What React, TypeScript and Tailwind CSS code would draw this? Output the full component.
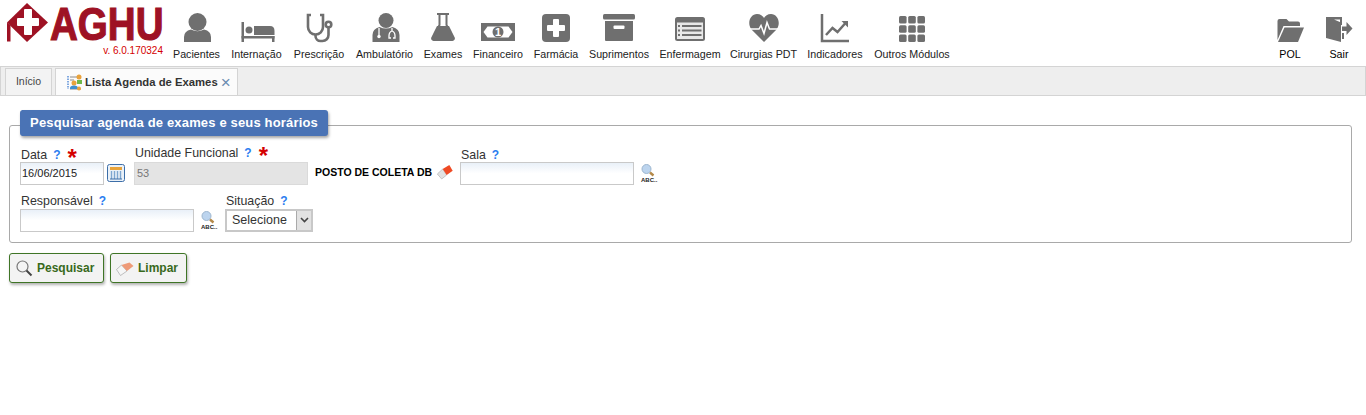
import React from "react";

const G = "#6f6f6f";

const Svg = ({ children }: { children: React.ReactNode }) => (
  <svg width="36" height="36" viewBox="0 0 36 36" className="block shrink-0">{children}</svg>
);

const icons: Record<string, React.ReactNode> = {
  pacientes: (
    <g fill={G}>
      <ellipse cx="18.500" cy="13" rx="9" ry="9" />
      <path d="M5 33v-5q0-6 7-7.500q6.500 3.500 13 0q7 1.500 7 7.500v5z" />
    </g>
  ),
  internacao: (
    <g fill={G}>
      <rect x="2.500" y="13" width="2.500" height="20" />
      <circle cx="10" cy="21" r="3.500" />
      <path d="M15 17h16q4.500 0 4.500 5v4H15z" />
      <rect x="2.500" y="27" width="33" height="2.500" />
      <rect x="33" y="27" width="2.500" height="6" />
    </g>
  ),
  prescricao: (
    <g fill="none" stroke={G} strokeWidth="2.600">
      <path d="M10 6H7v12a7.500 7.500 0 0 0 15 0V6h-3" />
      <path d="M14.500 26v1a5 5 0 0 0 5 5h2a6 6 0 0 0 6-6v-7" />
      <circle cx="27.500" cy="15.500" r="2.800" />
    </g>
  ),
  ambulatorio: (
    <g>
      <ellipse cx="19" cy="11.500" rx="7.500" ry="7.500" fill={G} />
      <path d="M5.500 33v-7q0-6 7-8q6.500 3 13 0q7 2 7 8v7z" fill={G} />
      <path d="M12 19v7M25 19v3q3 1 3 5v2h-2M25 22q-3 1-3 5v2h2" stroke="#fff" strokeWidth="1.300" fill="none" />
      <circle cx="12" cy="27.500" r="1.700" fill="#fff" />
    </g>
  ),
  exames: (
    <g>
      <rect x="12" y="4" width="12" height="2" fill={G} />
      <path d="M14.500 6v10L8 28.500M21.500 6v10L28 28.500" stroke={G} strokeWidth="2" fill="none" />
      <path d="M12 17h12l5.700 11.500A2.500 2.500 0 0 1 27.500 32h-19a2.500 2.500 0 0 1-2.200-3.500z" fill={G} />
    </g>
  ),
  financeiro: (
    <g>
      <rect x="1" y="14" width="34" height="18" fill={G} />
      <path d="M3.500 23l4-5.500h21l4 5.500-4 5.500h-21z" fill="#fff" />
      <circle cx="18" cy="23" r="5.500" fill={G} />
      <text x="18" y="27" textAnchor="middle" fill="#fff" fontSize="11" fontWeight="700" fontFamily="Liberation Sans">1</text>
    </g>
  ),
  farmacia: (
    <g>
      <rect x="4" y="5" width="28" height="28" rx="4" fill={G} />
      <rect x="9" y="16" width="18" height="6" rx="1" fill="#fff" />
      <rect x="15" y="10" width="6" height="18" rx="1" fill="#fff" />
    </g>
  ),
  suprimentos: (
    <g>
      <rect x="2" y="5" width="32" height="5.500" rx="1.500" fill={G} />
      <path d="M4 12h28v19a1 1 0 0 1-1 1H5a1 1 0 0 1-1-1z" fill={G} />
      <rect x="12.500" y="16.500" width="11" height="3.500" rx="1" fill="#fff" />
    </g>
  ),
  enfermagem: (
    <g>
      <rect x="3" y="8" width="30" height="24" rx="2.500" fill={G} />
      <rect x="5" y="13.500" width="26" height="16.500" fill="#e8e8e8" />
      <path d="M6 17h2M6 21.500h2M6 26h2M10 17h19.500M10 21.500h19.500M10 26h19.500" stroke={G} strokeWidth="2" />
    </g>
  ),
  cirurgias: (
    <g>
      <path d="M18 33L5.500 20.500C.5 14 4.500 5 11 5c3.500 0 5.700 1.800 7 4c1.300-2.200 3.500-4 7-4c6.500 0 10.500 9 5.500 15.500z" fill={G} />
      <path d="M3 20h10l2-3.500 3 8 3-11 2.500 6.500h11" stroke="#fff" strokeWidth="1.500" fill="none" />
    </g>
  ),
  indicadores: (
    <g fill="none" stroke={G}>
      <path d="M5 5v27h27" strokeWidth="2.500" />
      <path d="M9 26l6.500-7 5 4 8-9" strokeWidth="2.500" />
      <path d="M24.500 12h6.500v6.500z" fill={G} strokeWidth="0" />
    </g>
  ),
  outros: (
    <g fill={G}>
      {[7, 16.200, 25.400].map((y) =>
        [5, 14.200, 23.400].map((x) => <rect key={`${x}-${y}`} x={x} y={y} width="7.600" height="7.600" rx="1.500" />)
      )}
    </g>
  ),
  pol: (
    <g fill={G}>
      <path d="M5.500 31V12a2 2 0 0 1 2-2h7l2.500 2.500h9a2 2 0 0 1 2 2V17H11.500z" />
      <path d="M12.500 18.500H32L26 33H6z" />
    </g>
  ),
  sair: (
    <g fill={G}>
      <path d="M5 8h16v8h-2v-5.500h-6l7 3V33L5 29z" />
      <path d="M21 22v-4.500h4.500V13l6 6.500-6 6.500v-4z" />
      <rect x="21" y="24" width="2" height="6" />
    </g>
  ),
};

const nav: [string, string, string][] = [
  ["pacientes", "Pacientes", "w-[47px]"],
  ["internacao", "Internação", "w-[51px]"],
  ["prescricao", "Prescrição", "w-[52px]"],
  ["ambulatorio", "Ambulatório", "w-[57px]"],
  ["exames", "Exames", "w-[38px]"],
  ["financeiro", "Financeiro", "w-[50px]"],
  ["farmacia", "Farmácia", "w-[44px]"],
  ["suprimentos", "Suprimentos", "w-[60px]"],
  ["enfermagem", "Enfermagem", "w-[60px]"],
  ["cirurgias", "Cirurgias PDT", "w-[65px]"],
  ["indicadores", "Indicadores", "w-[56px]"],
  ["outros", "Outros Módulos", "w-[76px]"],
];

const NavItem = ({ icon, label, w, dark }: { icon: string; label: string; w: string; dark?: boolean }) => (
  <div className={`flex flex-col items-center pt-[9px] ${w}`}>
    <Svg>{icons[icon]}</Svg>
    <span className={`mt-[2px] text-[10.700px] leading-[14px] whitespace-nowrap ${dark ? "text-black" : "text-[#222]"}`}>{label}</span>
  </div>
);

const Logo = () => (
  <svg width="50" height="42" viewBox="0 0 50 42" className="block shrink-0">
    <path d="M7 19.500L27 0l21 19.500L27 39z" fill="#9e1224" />
    <path d="M7 19.500l3.500 3V38.500H7z" fill="#9e1224" />
    <rect x="17" y="15" width="22" height="8" rx="1" fill="#fff" />
    <rect x="24" y="6" width="8" height="26" rx="1" fill="#fff" />
  </svg>
);

const Help = () => <span className="ml-[6px] text-[12px] font-bold text-[#2b7df0]">?</span>;
const Req = () => <span className="ml-[7px] text-[24px] leading-[14px] font-bold text-[#d40000] align-[-7px]">*</span>;

const Label = ({ children, top }: { children: React.ReactNode; top?: boolean }) => (
  <div className={`h-[15px] pl-[1px] text-[12.400px] leading-[14px] text-[#333] whitespace-nowrap ${top ? "pt-[1px]" : ""}`}>{children}</div>
);

const inputCls =
  "h-[23px] border border-[#c9c9c9] bg-gradient-to-b from-[#e9f0f8] to-white to-50% px-[1px] text-[11px] text-[#222] outline-none";

const Lookup = () => (
  <svg width="18" height="20" viewBox="0 0 18 20" className="block shrink-0">
    <circle cx="6.500" cy="6" r="4.500" fill="#bcd4ee" stroke="#9db6cf" />
    <path d="M10 9.500l3.500 3" stroke="#b58a4a" strokeWidth="2.400" />
    <text x="1" y="18.500" fontSize="6" fontWeight="700" fontFamily="Liberation Sans" fill="#222">ABC..</text>
  </svg>
);

const Eraser = () => (
  <svg width="18" height="18" viewBox="0 0 18 18" className="block shrink-0">
    <path d="M1.300 10l5.400-5 4 6-5 4z" fill="#e2e2e2" stroke="#a8a8a8" strokeWidth=".6" />
    <path d="M6.700 5l6.600-4 3.400 5.700-6 4.300z" fill="#ef4a24" />
  </svg>
);

const EraserSoft = () => (
  <svg width="18" height="18" viewBox="0 0 18 18" className="block shrink-0">
    <path d="M.5 10.500l5-4.500 5.500 6-6.500 4.500z" fill="#f6f6f6" stroke="#a8a8a8" strokeWidth=".7" />
    <path d="M5.500 6l8-2.500 4 3.500-6.500 5z" fill="#ee9a78" />
  </svg>
);

const Calendar = () => (
  <svg width="18" height="18" viewBox="0 0 18 18" className="block shrink-0">
    <rect x=".5" y=".5" width="17" height="17" rx="2" fill="#eaf1f8" stroke="#3c6ea8" />
    <rect x="3" y="3" width="12" height="3" fill="#e8a33a" />
    <path d="M4.500 7v8M7.500 7v8M10.500 7v8M13.500 7v8" stroke="#7ea6cf" strokeWidth="1.400" />
    <rect x="3" y="14.500" width="12" height="1" fill="#3c6ea8" />
  </svg>
);

const TabIcon = () => (
  <svg width="16" height="17" viewBox="0 0 16 17" className="block shrink-0">
    <path d="M1 2v13" stroke="#5a8fd8" strokeWidth="1.500" strokeDasharray="1.500 1" />
    <path d="M3 3h9M3 6h4M3 15h11" stroke="#8a8a8a" strokeWidth="1" />
    <circle cx="12" cy="3" r="2.500" fill="#e9a23b" />
    <rect x="10" y="6" width="5" height="4" fill="#6fb84a" />
    <circle cx="7" cy="9" r="2.500" fill="#e9a23b" />
    <path d="M3 15v-1q0-2.500 4-2.500t4 2.500v1z" fill="#3f8fd0" />
    <circle cx="12" cy="14.500" r="2" fill="#e9a23b" />
  </svg>
);

const Magnifier = () => (
  <svg width="18" height="18" viewBox="0 0 18 18" className="block shrink-0">
    <circle cx="7.500" cy="7.500" r="5.500" fill="#f4f4f4" stroke="#777" strokeWidth="1.200" />
    <path d="M11.500 11.500L16.500 16.500" stroke="#444" strokeWidth="2" />
  </svg>
);

const Btn = ({ children, w }: { children: React.ReactNode; w: string }) => (
  <button className={`flex h-[30px] items-center gap-[4px] rounded-[3px] border border-[#3f7526] bg-[#f3f3f3] pl-[5px] text-[12px] font-bold text-[#38691c] shadow-[1px_2px_3px_rgba(0,0,0,0.3)] ${w}`}>
    {children}
  </button>
);

export default function App() {
  return (
    <div className="min-h-[415px] bg-white font-['Liberation_Sans',Arial,sans-serif]">
      <header className="flex h-[66px] items-start">
        <div className="w-[173px] shrink-0 pt-[3px]">
          <div className="flex h-[42px] items-start">
            <Logo />
            <span className="w-[113px] origin-left scale-x-[0.82] text-[47px] leading-[42px] font-bold whitespace-nowrap text-[#9e1224] [-webkit-text-stroke:1.200px_#9e1224]">AGHU</span>
          </div>
          <div className="pr-[10px] text-right text-[10px] leading-[12px] text-[#d40000]">v. 6.0.170324</div>
        </div>
        <nav className="flex gap-[11px]">
          {nav.map(([i, l, w]) => (
            <NavItem key={i} icon={i} label={l} w={w} />
          ))}
        </nav>
        <div className="ml-auto flex gap-[13px] pr-[9px]">
          <NavItem icon="pol" label="POL" w="w-[36px]" dark />
          <NavItem icon="sair" label="Sair" w="w-[36px]" dark />
        </div>
      </header>

      <div className="flex h-[30px] items-end gap-[3px] border border-[#d4d4d4] bg-[#eeeeee] pl-[4px]">
        <div className="flex h-[27px] w-[47px] items-center justify-center border border-b-0 border-[#d4d4d4] bg-[#f3f3f3] text-[10.500px] text-[#444]">Início</div>
        <div className="flex h-[27px] w-[183px] items-center border border-b-0 border-[#d4d4d4] bg-[#fbfbfb] pl-[11px] text-[11.300px] font-bold text-[#333]">
          <TabIcon />
          <span className="ml-[2px]">Lista Agenda de Exames</span>
          <span className="ml-[3px] text-[17px] leading-none font-normal text-[#6b8bb0]">×</span>
        </div>
      </div>

      <div className="px-[9px] pt-[14px] pr-[14px]">
        <fieldset className="rounded-[3px] border border-[#a9a9a9] pr-[10px] pb-[10px] pl-[10px]">
          <legend className="h-[30px]">
            <div className="flex h-[26px] w-[308px] items-center justify-center rounded-[3px] bg-[#4a73b5] text-[13px] font-bold tracking-[0.16px] text-white shadow-[1px_2px_3px_rgba(0,0,0,0.35)]">
              Pesquisar agenda de exames e seus horários
            </div>
          </legend>
          <div className="flex items-end pt-[5px]">
            <div className="w-[114px] shrink-0">
              <Label top>
                Data<Help /><Req />
              </Label>
              <div className="flex items-center gap-[3px]">
                <input className={`${inputCls} w-[84px]`} defaultValue="16/06/2015" />
                <Calendar />
              </div>
            </div>
            <div className="w-[174px] shrink-0">
              <Label top>
                Unidade Funcional<Help /><Req />
              </Label>
              <input className="h-[23px] w-[174px] border border-[#dadada] bg-[#e4e4e4] px-[2px] text-[11px] text-[#777] outline-none" defaultValue="53" readOnly />
            </div>
            <div className="flex h-[23px] w-[152px] shrink-0 items-center pl-[7px]">
              <span className="text-[10.500px] font-bold whitespace-nowrap text-black">POSTO DE COLETA DB</span>
              <span className="ml-[4px]"><Eraser /></span>
            </div>
            <div className="shrink-0">
              <Label top>
                Sala<Help />
              </Label>
              <div className="flex items-center gap-[6px]">
                <input className={`${inputCls} w-[174px]`} />
                <Lookup />
              </div>
            </div>
          </div>
          <div className="mt-[9px] flex items-end">
            <div className="w-[205px] shrink-0">
              <Label>
                Responsável<Help />
              </Label>
              <div className="flex items-center gap-[6px]">
                <input className={`${inputCls} w-[174px]`} />
                <Lookup />
              </div>
            </div>
            <div className="shrink-0">
              <Label>
                Situação<Help />
              </Label>
              <div className="relative h-[23px] w-[88px]">
                <select className="block h-[23px] w-[88px] appearance-none border-2 border-[#c8c8c8] bg-white pl-[5px] text-[12.500px] text-[#333] outline-none">
                  <option>Selecione</option>
                </select>
                <span className="absolute top-[2px] right-[2px] flex h-[19px] w-[15px] items-center justify-center border-l border-[#aaa] bg-[#e2e2e2]">
                  <svg width="9" height="6" viewBox="0 0 9 6"><path d="M1 1l3.500 3.500L8 1" stroke="#444" strokeWidth="1.600" fill="none" /></svg>
                </span>
              </div>
            </div>
          </div>
        </fieldset>
        <div className="mt-[10px] flex gap-[6px]">
          <Btn w="w-[95px]">
            <Magnifier />
            Pesquisar
          </Btn>
          <Btn w="w-[77px]">
            <EraserSoft />
            Limpar
          </Btn>
        </div>
      </div>
    </div>
  );
}
